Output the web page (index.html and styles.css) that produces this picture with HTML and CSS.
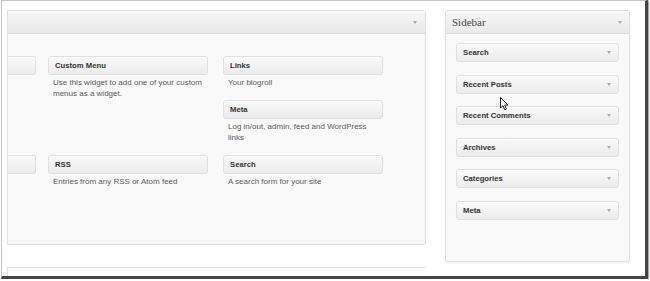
FILE: index.html
```html
<!DOCTYPE html>
<html lang="en">
<head>
  <meta charset="UTF-8">
  <title>Widgets</title>
  <link rel="stylesheet" href="styles.css">
</head>
<body>
  <div class="frame">
    <div class="screen">
      <div class="main-col">
        <div class="panel main-panel">
          <div class="panel-head"><span class="arrow"></span></div>
          <div class="widget-grid">
            <div class="cell cell-cut">
              <div class="widget-top cut"></div>
            </div>
            <div class="cell">
              <div class="widget-top">Custom Menu</div>
              <div class="widget-desc">Use this widget to add one of your custom menus as a widget.</div>
            </div>
            <div class="cell">
              <div class="widget">
                <div class="widget-top">Links</div>
                <div class="widget-desc">Your blogroll</div>
              </div>
              <div class="widget">
                <div class="widget-top">Meta</div>
                <div class="widget-desc">Log in/out, admin, feed and WordPress links</div>
              </div>
            </div>
            <div class="cell cell-cut">
              <div class="widget-top cut"></div>
            </div>
            <div class="cell">
              <div class="widget-top">RSS</div>
              <div class="widget-desc">Entries from any RSS or Atom feed</div>
            </div>
            <div class="cell">
              <div class="widget-top">Search</div>
              <div class="widget-desc">A search form for your site</div>
            </div>
          </div>
        </div>
        <div class="panel next-panel"></div>
      </div>

      <div class="panel sidebar">
        <div class="panel-head sidebar-head">
          <span class="sidebar-name">Sidebar</span>
          <span class="arrow"></span>
        </div>
        <div class="sidebar-list">
          <div class="widget-top side">Search <span class="arrow"></span></div>
          <div class="widget-top side">Recent Posts <span class="arrow"></span></div>
          <div class="widget-top side">Recent Comments <span class="arrow"></span></div>
          <div class="widget-top side">Archives <span class="arrow"></span></div>
          <div class="widget-top side">Categories <span class="arrow"></span></div>
          <div class="widget-top side">Meta <span class="arrow"></span></div>
        </div>
      </div>
    </div>

    <svg class="cursor" width="9" height="14" viewBox="0 0 9 14">
      <path d="M0.5 0.5 L0.5 11 L3 8.6 L4.8 12.8 L6.4 12.1 L4.7 8.1 L8 8.1 Z" fill="#fff" stroke="#222" stroke-width="1" stroke-linejoin="round"/>
    </svg>
  </div>
</body>
</html>
```

FILE: styles.css
```css
body {
  margin: 0;
  padding: 0;
  background: #fff;
  font-family: 'Liberation Sans', Arial, sans-serif;
}

.frame {
  position: relative;
  margin-left: 1px;
  width: 643px;
  height: 275px;
  border-top: 1px solid #c4c4c4;
  border-left: 1px solid #c4c4c4;
  border-right: 3px solid #444;
  border-bottom: 3px solid #444;
  box-shadow: 1px 1px 1px #aaa;
}

.screen {
  display: flex;
  height: 100%;
  padding: 9px 0 0 5px;
  box-sizing: border-box;
  overflow: hidden;
  background: #fff;
}

.main-col {
  width: 419px;
  margin-right: 19px;
  flex-shrink: 0;
}

.panel {
  border: 1px solid #dfdfdf;
  border-radius: 3px;
  background: #f9f9f9;
  box-sizing: border-box;
}

.main-panel {
  height: 235px;
  border-top-left-radius: 0;
  border-bottom-left-radius: 0;
}

.next-panel {
  height: 30px;
  margin-top: 22px;
  background: #fdfdfd;
  border-radius: 0;
  border-right: none;
}

.panel-head {
  height: 23px;
  border-bottom: 1px solid #dcdcdc;
  background: linear-gradient(to bottom, #f7f7f7, #e9e9e9);
  box-sizing: border-box;
  display: flex;
  align-items: center;
  justify-content: flex-end;
  padding-right: 8px;
}

.arrow {
  display: inline-block;
  width: 0;
  height: 0;
  border-left: 2.5px solid transparent;
  border-right: 2.5px solid transparent;
  border-top: 3px solid #aaa;
}

.widget-grid {
  display: grid;
  grid-template-columns: 40px 175px 160px;
  grid-template-rows: 99px auto;
  padding-top: 22px;
}

.widget-top {
  height: 19px;
  box-sizing: border-box;
  border: 1px solid #dfdfdf;
  border-radius: 3px;
  background: linear-gradient(to bottom, #f9f9f9, #ececec);
  box-shadow: inset 0 1px 0 #fff;
  padding: 0 6px;
  font-size: 7.7px;
  font-weight: bold;
  line-height: 17px;
  color: #333;
  width: 160px;
  display: flex;
  align-items: center;
  justify-content: space-between;
}

.widget-top.cut {
  width: 28px;
  border-left: none;
  border-top-left-radius: 0;
  border-bottom-left-radius: 0;
}

.widget-desc {
  padding: 2px 5px 0;
  font-size: 8px;
  line-height: 11px;
  color: #5a5a5a;
}

.widget {
  margin-bottom: 12px;
}

.sidebar {
  width: 185px;
  height: 252px;
  flex-shrink: 0;
  box-shadow: 0 1px 2px rgba(0, 0, 0, 0.08);
}

.sidebar-head {
  justify-content: space-between;
  padding: 0 7px 0 6px;
}

.sidebar-name {
  font-family: 'Liberation Serif', 'Times New Roman', serif;
  font-size: 11px;
  color: #464646;
}

.sidebar-list {
  display: flex;
  flex-direction: column;
  gap: 12.6px;
  padding: 9px 10px 0 10px;
}

.widget-top.side {
  width: 163px;
  padding-right: 7px;
}

.cursor {
  position: absolute;
  left: 498px;
  top: 96px;
}
```
